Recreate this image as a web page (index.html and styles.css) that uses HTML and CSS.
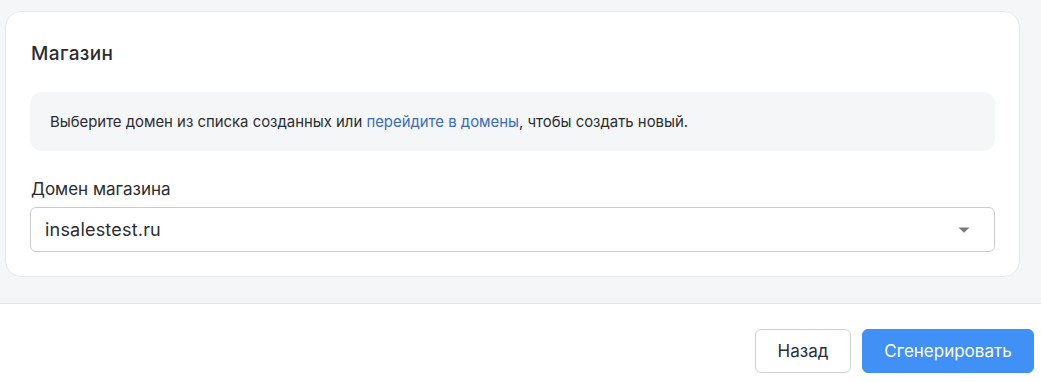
FILE: index.html
```html
<!DOCTYPE html>
<html lang="ru">
<head>
<meta charset="utf-8">
<link rel="stylesheet" href="styles.css">
</head>
<body>
<div class="page">
  <main class="content">
    <section class="card">
      <h2 class="card-title">Магазин</h2>
      <div class="notice">
        <p class="notice-text">Выберите домен из списка созданных или <a class="link" href="#">перейдите в домены</a>, чтобы создать новый.</p>
      </div>
      <div class="field">
        <label class="field-label">Домен магазина</label>
        <div class="select">
          <span class="select-value">insalestest.ru</span>
          <svg class="select-arrow" width="12" height="6" viewBox="0 0 12 6"><path d="M0.5 0.5 H11.5 L6 5.8 Z" fill="#7a7a7a"/></svg>
        </div>
      </div>
    </section>
  </main>
  <footer class="footer">
    <button class="btn btn-secondary">Назад</button>
    <button class="btn btn-primary">Сгенерировать</button>
  </footer>
</div>
</body>
</html>
```

FILE: styles.css
```css
* { box-sizing: border-box; }
html, body { margin: 0; padding: 0; }
body {
  background: #f5f6f8;
  font-family: Inter, "Noto Sans", sans-serif;
  color: #2b2d31;
  width: 1041px;
  height: 382px;
  overflow: hidden;
}
.page {
  display: flex;
  flex-direction: column;
  height: 382px;
}
.content {
  padding: 11px 21px 0 5px;
  height: 303px;
}
.card {
  background: #fff;
  border: 1px solid #e6e8eb;
  border-radius: 16px;
  height: 266px;
  padding: 30px 24px 0 24px;
}
.card-title {
  margin: 0;
  font-size: 19px;
  letter-spacing: 0.4px;
  font-weight: 500;
  line-height: 24px;
  color: #2b2d31;
  padding-left: 1px;
}
.notice {
  margin-top: 26px;
  background: #f5f6f8;
  border-radius: 12px;
  height: 59px;
  display: flex;
  align-items: center;
  padding: 0 20px;
}
.notice-text {
  margin: 0;
  font-size: 14.9px;
  line-height: 20px;
  color: #2b2d31;
}
.link {
  color: #3b6cc0;
  text-decoration: none;
}
.field {
  margin-top: 27px;
  display: flex;
  flex-direction: column;
}
.field-label {
  font-size: 17px;
  line-height: 22px;
  color: #2b2d31;
  padding-left: 1px;
}
.select {
  margin-top: 7px;
  height: 45px;
  border: 1px solid #cbcbcb;
  border-radius: 6px;
  display: flex;
  align-items: center;
  justify-content: space-between;
  padding: 0 24px 0 14px;
}
.select-value {
  font-size: 18px;
  letter-spacing: 0.2px;
  color: #2b2d31;
}
.select-arrow { display: block; }
.footer {
  flex: 1;
  background: #fff;
  border-top: 1px solid #e3e5e8;
  display: flex;
  justify-content: flex-end;
  align-items: flex-start;
  gap: 11px;
  padding: 25px 7px 0 0;
}
.btn {
  height: 44px;
  border-radius: 6px;
  font-family: Inter, "Noto Sans", sans-serif;
  font-size: 17px;
  padding: 0;
  cursor: pointer;
}
.btn-secondary {
  width: 96px;
  background: #fff;
  border: 1px solid #cfd1d4;
  color: #2b2d31;
}
.btn-primary {
  width: 172px;
  background: #4190f6;
  border: 1px solid #4190f6;
  color: #fff;
}
```
